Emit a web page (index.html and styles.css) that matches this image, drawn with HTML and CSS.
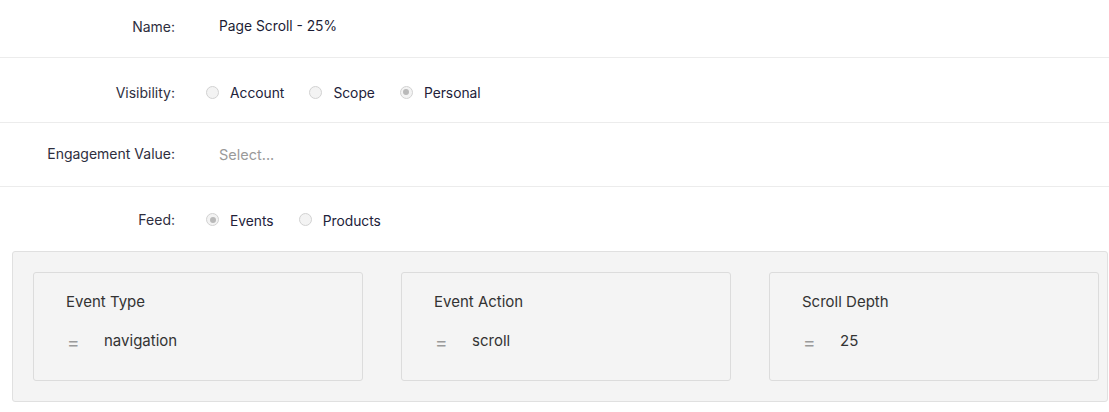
FILE: index.html
```html
<!DOCTYPE html>
<html>
<head>
<meta charset="utf-8">
<link rel="stylesheet" href="styles.css">
</head>
<body>
<div class="form">
  <div class="row row-first">
    <div class="label">Name:</div>
    <div class="value name-value">Page Scroll - 25%</div>
  </div>
  <div class="row row-second">
    <div class="label">Visibility:</div>
    <div class="value radios">
      <label class="radio"><span class="dot"></span>Account</label>
      <label class="radio"><span class="dot"></span>Scope</label>
      <label class="radio"><span class="dot checked"></span>Personal</label>
    </div>
  </div>
  <div class="row row-third">
    <div class="label">Engagement Value:</div>
    <div class="value placeholder">Select...</div>
  </div>
  <div class="row row-feed">
    <div class="label">Feed:</div>
    <div class="value radios">
      <label class="radio"><span class="dot checked"></span>Events</label>
      <label class="radio"><span class="dot"></span>Products</label>
    </div>
  </div>
</div>
<div class="panel">
  <div class="card">
    <div class="card-title">Event Type</div>
    <div class="card-cond"><span class="op">=</span><span class="val">navigation</span></div>
  </div>
  <div class="card">
    <div class="card-title">Event Action</div>
    <div class="card-cond"><span class="op">=</span><span class="val">scroll</span></div>
  </div>
  <div class="card">
    <div class="card-title">Scroll Depth</div>
    <div class="card-cond"><span class="op">=</span><span class="val">25</span></div>
  </div>
</div>
</body>
</html>
```

FILE: styles.css
```css
html, body {
  margin: 0;
  padding: 0;
  background: #fff;
}
body {
  font-family: Inter, "Liberation Sans", sans-serif;
  font-size: 14px;
  color: #2b2b3b;
  width: 1109px;
  overflow: hidden;
}
.row {
  display: flex;
  align-items: center;
  height: 64px;
  box-sizing: border-box;
  border-bottom: 1px solid #ececec;
}
.row-first {
  height: 58px;
  padding-bottom: 5px;
}
.row-second {
  height: 65px;
  padding-top: 4px;
}
.row-third {
  padding-bottom: 2px;
}
.row-feed {
  border-bottom: none;
  padding-top: 1px;
}
.label {
  width: 175px;
  text-align: right;
  color: #2e2e3e;
  flex-shrink: 0;
}
.value {
  margin-left: 44px;
  color: #1c1c34;
}
.name-value {
  font-size: 13.8px;
}
.placeholder {
  color: #9a9a9a;
  font-size: 14.5px;
  position: relative;
  top: 1px;
}
.radios {
  display: flex;
  align-items: center;
  margin-left: 31px;
  font-size: 13.8px;
  position: relative;
  top: 1px;
}
.radio {
  display: flex;
  align-items: center;
  margin-right: 25px;
  color: #22223a;
}
.dot {
  width: 11px;
  height: 11px;
  border-radius: 50%;
  border: 1px solid #d2d2d2;
  background: #f3f3f3;
  margin-right: 11px;
  position: relative;
  top: -1px;
  box-sizing: content-box;
}
.dot.checked::after {
  content: "";
  position: absolute;
  left: 2.5px;
  top: 2.5px;
  width: 6px;
  height: 6px;
  border-radius: 50%;
  background: #b9b9b9;
}
.panel {
  margin-left: 12px;
  width: 1096px;
  height: 151px;
  box-sizing: border-box;
  background: #f4f4f4;
  border: 1px solid #e0e0e0;
  border-radius: 3px;
  padding: 20px;
  display: grid;
  grid-template-columns: repeat(3, 330px);
  column-gap: 38px;
}
.card {
  height: 109px;
  box-sizing: border-box;
  border: 1px solid #dcdcdc;
  border-radius: 3px;
  background: #f4f4f4;
  padding: 20px 32px 0 32px;
  font-size: 15px;
  color: #333;
}
.card-title {
  line-height: 18px;
}
.card-cond {
  display: flex;
  align-items: center;
  margin-top: 21px;
  line-height: 18px;
}
.op {
  width: 37px;
  color: #9a9a9a;
  font-size: 19px;
  position: relative;
  top: 2px;
  padding-left: 1px;
}
.val {
  color: #333;
}
```
